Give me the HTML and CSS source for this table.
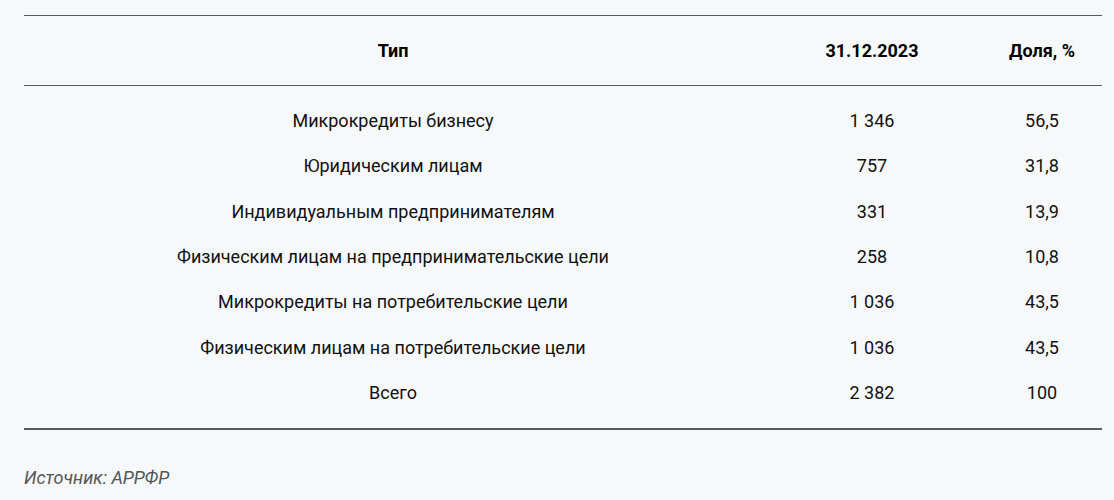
FILE: index.html
```html
<!DOCTYPE html>
<html lang="ru">
<head>
<meta charset="utf-8">
<link rel="stylesheet" href="styles.css">
</head>
<body>
<div class="wrap">
  <div class="table">
    <div class="row head">
      <div class="c1">Тип</div>
      <div class="c2">31.12.2023</div>
      <div class="c3">Доля, %</div>
    </div>
    <div class="body">
      <div class="row"><div class="c1">Микрокредиты бизнесу</div><div class="c2">1 346</div><div class="c3">56,5</div></div>
      <div class="row"><div class="c1">Юридическим лицам</div><div class="c2">757</div><div class="c3">31,8</div></div>
      <div class="row"><div class="c1">Индивидуальным предпринимателям</div><div class="c2">331</div><div class="c3">13,9</div></div>
      <div class="row"><div class="c1">Физическим лицам на предпринимательские цели</div><div class="c2">258</div><div class="c3">10,8</div></div>
      <div class="row"><div class="c1">Микрокредиты на потребительские цели</div><div class="c2">1 036</div><div class="c3">43,5</div></div>
      <div class="row"><div class="c1">Физическим лицам на потребительские цели</div><div class="c2">1 036</div><div class="c3">43,5</div></div>
      <div class="row"><div class="c1">Всего</div><div class="c2">2 382</div><div class="c3">100</div></div>
    </div>
  </div>
  <p class="source">Источник: АРРФР</p>
</div>
</body>
</html>
```

FILE: styles.css
```css
html, body {
  margin: 0;
  padding: 0;
  background: #f7f8fa;
}
body {
  font-family: Roboto, "Liberation Sans", sans-serif;
  font-size: 18px;
  line-height: 1.2;
  color: #111;
}
.wrap {
  padding: 15px 12px 0 24px;
}
.table {
  border-top: 1px solid #5a5a5a;
  border-bottom: 2px solid #5a5a5a;
}
.row {
  display: grid;
  grid-template-columns: 738px 220px 120px;
  align-items: center;
  text-align: center;
  height: 45.33px;
}
.row.head {
  height: 69px;
  font-weight: 700;
  color: #000;
  border-bottom: 1px solid #5a5a5a;
}
.body {
  padding: 12px 0 13px;
}
.source {
  margin: 37px 0 0;
  font-style: italic;
  color: #555;
  font-size: 18px;
}
```
